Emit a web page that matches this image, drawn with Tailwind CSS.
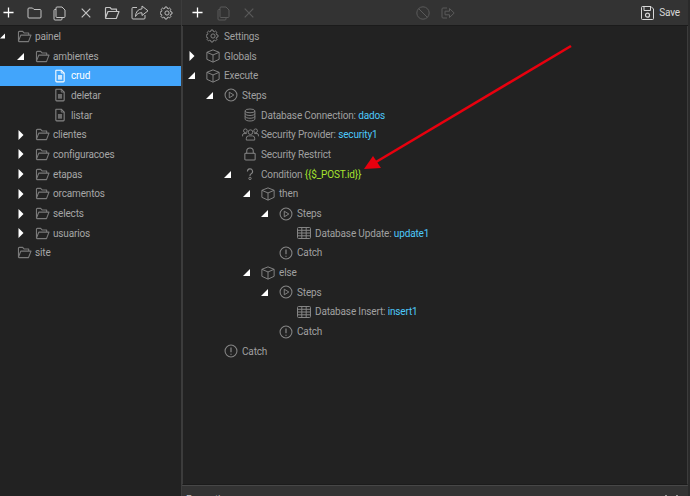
<!DOCTYPE html>
<html lang="en">
<head>
  <meta charset="UTF-8">
  <title>Server Action Editor</title>
  <script src="https://cdn.jsdelivr.net/npm/@tailwindcss/browser@4"></script>
</head>
<body class="bg-[#2a2a2a] overflow-hidden">
<svg class="hidden">
  <defs>
    <symbol id="open" viewBox="0 0 7 7"><path d="M7 0V7H0Z" fill="#fff"/></symbol>
    <symbol id="closed" viewBox="0 0 6 10"><path d="M0.5 0L5.5 5L0.5 10Z" fill="#fff"/></symbol>
    <symbol id="folder-open" viewBox="0 0 16 14"><path d="M1.5 11.5V2.5Q1.5 1.5 2.5 1.5H6L7.5 3.2H12.5V5.5M1.5 12L4 5.5H15L12.3 12.5H2Z" fill="none" stroke="currentColor" stroke-width="1.2" stroke-linejoin="round"/></symbol>
    <symbol id="file" viewBox="0 0 12 16"><path d="M1.5 1H7.5L11 4.5V14Q11 15 10 15H2Q1 15 1 14V1.5Z" fill="none" stroke="currentColor" stroke-width="1.3" stroke-linejoin="round"/><path d="M7.5 1V4.5H11" fill="none" stroke="currentColor"/><rect x="3.5" y="6.8" width="5" height="5.6" fill="currentColor" opacity=".75"/></symbol>
    <symbol id="cube" viewBox="0 0 16 16"><path d="M8 1L15 3.8V11.8L8 15L1 11.8V3.8ZM1 3.8L8 6.8L15 3.8M8 6.8V15" fill="none" stroke="currentColor" stroke-width="1.1" stroke-linejoin="round"/></symbol>
    <symbol id="gear" viewBox="0 0 24 24"><path d="M10 2h4l.6 2.9 1.9.8 2.5-1.6 2.9 2.9-1.6 2.5.8 1.9 2.9.6v4l-2.9.6-.8 1.9 1.6 2.5-2.9 2.9-2.5-1.6-1.9.8L14 26h-4" transform="scale(.857)" fill="none" stroke="currentColor" stroke-width="1.9" stroke-linejoin="round"/><path d="M10 2l-.6 2.9-1.9.8L5 4.1 2.1 7l1.6 2.5-.8 1.9L0 12v4l2.9.6.8 1.9L2.1 21 5 23.9l2.5-1.6 1.9.8L10 26" transform="scale(.857) translate(.1 0)" fill="none" stroke="currentColor" stroke-width="1.9" stroke-linejoin="round"/><circle cx="12" cy="12" r="3.6" fill="none" stroke="currentColor" stroke-width="1.6"/></symbol>
    <symbol id="play" viewBox="0 0 16 16"><circle cx="8" cy="8" r="6.8" fill="none" stroke="currentColor" stroke-width="1.2"/><path d="M6 4.8L11.2 8L6 11.2Z" fill="none" stroke="currentColor" stroke-width="1.1" stroke-linejoin="round"/></symbol>
    <symbol id="db" viewBox="0 0 14 16"><ellipse cx="7" cy="3.2" rx="5.7" ry="2.2" fill="none" stroke="currentColor" stroke-width="1.1"/><path d="M1.3 3.2V12.8C1.3 14 4 15 7 15S12.7 14 12.7 12.8V3.2M1.3 6.4C1.3 7.6 4 8.6 7 8.6S12.7 7.6 12.7 6.4M1.3 9.6C1.3 10.8 4 11.8 7 11.8S12.7 10.8 12.7 9.6" fill="none" stroke="currentColor" stroke-width="1.1"/></symbol>
    <symbol id="users" viewBox="0 0 18 14"><circle cx="9" cy="4.5" r="2.5" fill="none" stroke="currentColor"/><path d="M4.5 13V11Q4.5 8.5 7 8.5H11Q13.5 8.5 13.5 11V13Z" fill="none" stroke="currentColor"/><circle cx="3.5" cy="3" r="2" fill="none" stroke="currentColor"/><circle cx="14.5" cy="3" r="2" fill="none" stroke="currentColor"/><path d="M.5 9V7.5Q.5 6 2 6H5M17.5 9V7.5Q17.5 6 16 6H13" fill="none" stroke="currentColor"/></symbol>
    <symbol id="lock" viewBox="0 0 14 16"><rect x="1" y="7" width="12" height="8" rx="1" fill="none" stroke="currentColor" stroke-width="1.2"/><path d="M3.2 7V4.8A3.8 3.8 0 0 1 10.8 4.8V7" fill="none" stroke="currentColor" stroke-width="1.2"/></symbol>
    <symbol id="question" viewBox="0 0 10 16"><path d="M1.8 4.8A3.2 3.2 0 1 1 6.5 7.6Q5 8.4 5 10V10.5" fill="none" stroke="currentColor" stroke-width="1.4"/><circle cx="5" cy="13.5" r="1.5" fill="none" stroke="currentColor" stroke-width="1.2"/></symbol>
    <symbol id="table" viewBox="0 0 14 12"><rect x=".5" y=".5" width="13" height="11" rx="1" fill="none" stroke="currentColor"/><path d="M.5 3.3H13.5M.5 6H13.5M.5 8.8H13.5M4.8 .5V11.5M9.2 .5V11.5" fill="none" stroke="currentColor"/></symbol>
    <symbol id="alert" viewBox="0 0 16 16"><circle cx="8" cy="8" r="6.8" fill="none" stroke="currentColor" stroke-width="1.2"/><path d="M8 4V9.5M8 11V12.2" fill="none" stroke="currentColor" stroke-width="1.4"/></symbol>
    <symbol id="plus" viewBox="0 0 12 12"><path d="M6 .5V11.5M.5 6H11.5" fill="none" stroke="currentColor" stroke-width="1.4"/></symbol>
    <symbol id="folder" viewBox="0 0 15 12"><path d="M1 2Q1 1 2 1H5.5L7 2.5H13Q14 2.5 14 3.5V10Q14 11 13 11H2Q1 11 1 10Z" fill="none" stroke="currentColor" stroke-linejoin="round"/></symbol>
    <symbol id="copy" viewBox="0 0 13 15"><path d="M4 1H9L12 4V10.5Q12 11.5 11 11.5H4Q3 11.5 3 10.5V2Q3 1 4 1ZM3 3.5H2Q1 3.5 1 4.5V13Q1 14 2 14H8Q9 14 9 13V11.5" fill="none" stroke="currentColor" stroke-linejoin="round"/></symbol>
    <symbol id="x" viewBox="0 0 10 10"><path d="M.7 .7L9.3 9.3M9.3 .7L.7 9.3" fill="none" stroke="currentColor" stroke-width="1.2"/></symbol>
    <symbol id="share" viewBox="0 0 18 15"><path d="M14 10V13Q14 14 13 14H2Q1 14 1 13V3.5Q1 2.5 2 2.5H6" fill="none" stroke="currentColor"/><path d="M11 1L17 5.8L11 10.5V7.8Q6.5 7.5 4.5 11.5Q4.8 4.5 11 3.8Z" fill="none" stroke="currentColor" stroke-linejoin="round"/></symbol>
    <symbol id="ban" viewBox="0 0 14 14"><circle cx="7" cy="7" r="6.2" fill="none" stroke="currentColor"/><path d="M2.6 2.6L11.4 11.4" stroke="currentColor"/></symbol>
    <symbol id="export" viewBox="0 0 14 12"><path d="M6 1H2Q1 1 1 2V10Q1 11 2 11H6" fill="none" stroke="currentColor"/><path d="M4 4.2H8.5V1.5L13.2 6L8.5 10.5V7.8H4Z" fill="none" stroke="currentColor" stroke-linejoin="round"/></symbol>
    <symbol id="save" viewBox="0 0 13 14"><path d="M1.5 .5H10L12.5 3V12.5Q12.5 13.5 11.5 13.5H1.5Q.5 13.5 .5 12.5V1.5Q.5 .5 1.5 .5Z" fill="none" stroke="currentColor"/><path d="M3 .5V4.5H9.5V.5" fill="none" stroke="currentColor"/><circle cx="6.5" cy="9.2" r="2" fill="none" stroke="currentColor" stroke-width="1.2"/></symbol>
  </defs>
</svg>

<div class="relative flex w-[690px] h-[496px] overflow-hidden font-['Roboto',sans-serif] text-[10px] tracking-[-0.15px] text-[#a4a4a4]">
  <!-- file tree -->
  <aside class="w-[181px] flex flex-col bg-[#222] shrink-0">
    <div class="h-[26px] shrink-0 bg-[#333] border-b border-[#1b1b1b] relative text-[#c4c4c4]">
      <svg class="absolute left-[3px] top-[7px] w-[11px] h-[11px] text-white"><use href="#plus"/></svg>
      <svg class="absolute left-[27px] top-[7px] w-[15px] h-[12px]"><use href="#folder"/></svg>
      <svg class="absolute left-[53px] top-[6px] w-[13px] h-[15px]"><use href="#copy"/></svg>
      <svg class="absolute left-[81px] top-[8px] w-[10px] h-[10px]"><use href="#x"/></svg>
      <svg class="absolute left-[104px] top-[6px] w-[16px] h-[14px]"><use href="#folder-open"/></svg>
      <svg class="absolute left-[131px] top-[5px] w-[18px] h-[15px]"><use href="#share"/></svg>
      <svg class="absolute left-[160px] top-[6px] w-[14px] h-[14px]"><use href="#gear"/></svg>
    </div>
    <div class="flex flex-col text-[#a6a6a6] pt-[0.5px]">
      <div class="flex items-center h-[19.7px] -ml-[1px]"><span class="w-[18px] flex justify-start pl-[1px]"><svg class="w-[5px] h-[6px]"><use href="#open"/></svg></span><span class="w-[18px] text-[#7a7a7a]"><svg class="w-[15px] h-[13px]"><use href="#folder-open"/></svg></span>painel</div>
      <div class="flex items-center h-[19.7px] pl-[17px]"><span class="w-[18px]"><svg class="w-[7px] h-[7px]"><use href="#open"/></svg></span><span class="w-[18px] text-[#7a7a7a]"><svg class="w-[15px] h-[13px]"><use href="#folder-open"/></svg></span>ambientes</div>
      <div class="flex items-center h-[19.7px] pl-[35px] bg-[#42a5fb] text-white"><span class="w-[18px]"></span><span class="w-[18px] pl-[2px]"><svg class="w-[10px] h-[14px]"><use href="#file"/></svg></span>crud</div>
      <div class="flex items-center h-[19.7px] pl-[35px]"><span class="w-[18px]"></span><span class="w-[18px] pl-[2px] text-[#858585]"><svg class="w-[10px] h-[14px]"><use href="#file"/></svg></span>deletar</div>
      <div class="flex items-center h-[19.7px] pl-[35px]"><span class="w-[18px]"></span><span class="w-[18px] pl-[2px] text-[#858585]"><svg class="w-[10px] h-[14px]"><use href="#file"/></svg></span>listar</div>
      <div class="flex items-center h-[19.7px] pl-[17px]"><span class="w-[18px] pl-[1px]"><svg class="w-[6px] h-[10px]"><use href="#closed"/></svg></span><span class="w-[18px] text-[#7a7a7a]"><svg class="w-[15px] h-[13px]"><use href="#folder-open"/></svg></span>clientes</div>
      <div class="flex items-center h-[19.7px] pl-[17px]"><span class="w-[18px] pl-[1px]"><svg class="w-[6px] h-[10px]"><use href="#closed"/></svg></span><span class="w-[18px] text-[#7a7a7a]"><svg class="w-[15px] h-[13px]"><use href="#folder-open"/></svg></span>configuracoes</div>
      <div class="flex items-center h-[19.7px] pl-[17px]"><span class="w-[18px] pl-[1px]"><svg class="w-[6px] h-[10px]"><use href="#closed"/></svg></span><span class="w-[18px] text-[#7a7a7a]"><svg class="w-[15px] h-[13px]"><use href="#folder-open"/></svg></span>etapas</div>
      <div class="flex items-center h-[19.7px] pl-[17px]"><span class="w-[18px] pl-[1px]"><svg class="w-[6px] h-[10px]"><use href="#closed"/></svg></span><span class="w-[18px] text-[#7a7a7a]"><svg class="w-[15px] h-[13px]"><use href="#folder-open"/></svg></span>orcamentos</div>
      <div class="flex items-center h-[19.7px] pl-[17px]"><span class="w-[18px] pl-[1px]"><svg class="w-[6px] h-[10px]"><use href="#closed"/></svg></span><span class="w-[18px] text-[#7a7a7a]"><svg class="w-[15px] h-[13px]"><use href="#folder-open"/></svg></span>selects</div>
      <div class="flex items-center h-[19.7px] pl-[17px]"><span class="w-[18px] pl-[1px]"><svg class="w-[6px] h-[10px]"><use href="#closed"/></svg></span><span class="w-[18px] text-[#7a7a7a]"><svg class="w-[15px] h-[13px]"><use href="#folder-open"/></svg></span>usuarios</div>
      <div class="flex items-center h-[19.7px] -ml-[1px]"><span class="w-[18px]"></span><span class="w-[18px] text-[#7a7a7a]"><svg class="w-[15px] h-[13px]"><use href="#folder-open"/></svg></span>site</div>
    </div>
  </aside>

  <div class="w-[1px] bg-[#3c3c3c] shrink-0"></div>

  <!-- action editor -->
  <main class="flex-1 flex flex-col min-w-0 mr-[2px]">
    <div class="h-[26px] shrink-0 bg-[#333] border-b border-[#1b1b1b] relative text-[#5a5a5a]">
      <svg class="absolute left-[10px] top-[7px] w-[11px] h-[11px] text-white"><use href="#plus"/></svg>
      <svg class="absolute left-[35px] top-[6px] w-[13px] h-[15px]"><use href="#copy"/></svg>
      <svg class="absolute left-[62px] top-[8px] w-[10px] h-[10px]"><use href="#x"/></svg>
      <svg class="absolute left-[234px] top-[6px] w-[14px] h-[14px]"><use href="#ban"/></svg>
      <svg class="absolute left-[259px] top-[7px] w-[14px] h-[12px]"><use href="#export"/></svg>
      <div class="absolute right-[8px] top-0 h-[25px] flex items-center gap-[5px] text-[#d8d8d8]"><svg class="w-[13px] h-[14px]"><use href="#save"/></svg>Save</div>
    </div>
    <div class="flex-1 bg-[#222] border-x border-b border-x-[#3c3c3c] border-b-[#1b1b1b] flex flex-col text-[#a0a0a0] pt-[0.5px]">
      <div class="flex items-center h-[19.7px] pl-[5px]"><span class="w-[18px]"></span><span class="w-[18px] text-[#858585]"><svg class="w-[14px] h-[14px]"><use href="#gear"/></svg></span>Settings</div>
      <div class="flex items-center h-[19.7px] pl-[5px]"><span class="w-[18px] pl-[1px]"><svg class="w-[6px] h-[10px]"><use href="#closed"/></svg></span><span class="w-[18px] text-[#858585]"><svg class="w-[14px] h-[14px]"><use href="#cube"/></svg></span>Globals</div>
      <div class="flex items-center h-[19.7px] pl-[5px]"><span class="w-[18px]"><svg class="w-[7px] h-[7px]"><use href="#open"/></svg></span><span class="w-[18px] text-[#858585]"><svg class="w-[14px] h-[14px]"><use href="#cube"/></svg></span>Execute</div>
      <div class="flex items-center h-[19.7px] pl-[23px]"><span class="w-[18px]"><svg class="w-[7px] h-[7px]"><use href="#open"/></svg></span><span class="w-[18px] text-[#858585]"><svg class="w-[14px] h-[14px]"><use href="#play"/></svg></span>Steps</div>
      <div class="flex items-center h-[19.7px] pl-[41px]"><span class="w-[18px]"></span><span class="w-[19px] pl-[2px] text-[#858585]"><svg class="w-[12px] h-[14px]"><use href="#db"/></svg></span><span>Database Connection: <span class="text-[#4dc9fb]">dados</span></span></div>
      <div class="flex items-center h-[19.7px] pl-[41px]"><span class="w-[18px]"></span><span class="w-[19px] text-[#858585]"><svg class="w-[17px] h-[13px]"><use href="#users"/></svg></span><span>Security Provider: <span class="text-[#4dc9fb]">security1</span></span></div>
      <div class="flex items-center h-[19.7px] pl-[41px]"><span class="w-[18px]"></span><span class="w-[19px] pl-[2px] text-[#858585]"><svg class="w-[12px] h-[14px]"><use href="#lock"/></svg></span>Security Restrict</div>
      <div class="flex items-center h-[19.7px] pl-[41px]"><span class="w-[18px]"><svg class="w-[7px] h-[7px]"><use href="#open"/></svg></span><span class="w-[19px] pl-[4px] text-[#858585]"><svg class="w-[8px] h-[14px]"><use href="#question"/></svg></span><span>Condition <span class="text-[#a6e22e]">{{$_POST.id}}</span></span></div>
      <div class="flex items-center h-[19.7px] pl-[60px]"><span class="w-[18px]"><svg class="w-[7px] h-[7px]"><use href="#open"/></svg></span><span class="w-[18px] text-[#858585]"><svg class="w-[14px] h-[14px]"><use href="#cube"/></svg></span>then</div>
      <div class="flex items-center h-[19.7px] pl-[78px]"><span class="w-[18px]"><svg class="w-[7px] h-[7px]"><use href="#open"/></svg></span><span class="w-[18px] text-[#858585]"><svg class="w-[14px] h-[14px]"><use href="#play"/></svg></span>Steps</div>
      <div class="flex items-center h-[19.7px] pl-[96px]"><span class="w-[18px]"></span><span class="w-[18px] text-[#858585]"><svg class="w-[14px] h-[12px]"><use href="#table"/></svg></span><span>Database Update: <span class="text-[#4dc9fb]">update1</span></span></div>
      <div class="flex items-center h-[19.7px] pl-[78px]"><span class="w-[18px]"></span><span class="w-[18px] text-[#858585]"><svg class="w-[14px] h-[14px]"><use href="#alert"/></svg></span>Catch</div>
      <div class="flex items-center h-[19.7px] pl-[60px]"><span class="w-[18px]"><svg class="w-[7px] h-[7px]"><use href="#open"/></svg></span><span class="w-[18px] text-[#858585]"><svg class="w-[14px] h-[14px]"><use href="#cube"/></svg></span>else</div>
      <div class="flex items-center h-[19.7px] pl-[78px]"><span class="w-[18px]"><svg class="w-[7px] h-[7px]"><use href="#open"/></svg></span><span class="w-[18px] text-[#858585]"><svg class="w-[14px] h-[14px]"><use href="#play"/></svg></span>Steps</div>
      <div class="flex items-center h-[19.7px] pl-[96px]"><span class="w-[18px]"></span><span class="w-[18px] text-[#858585]"><svg class="w-[14px] h-[12px]"><use href="#table"/></svg></span><span>Database Insert: <span class="text-[#4dc9fb]">insert1</span></span></div>
      <div class="flex items-center h-[19.7px] pl-[78px]"><span class="w-[18px]"></span><span class="w-[18px] text-[#858585]"><svg class="w-[14px] h-[14px]"><use href="#alert"/></svg></span>Catch</div>
      <div class="flex items-center h-[19.7px] pl-[23px]"><span class="w-[18px]"></span><span class="w-[18px] text-[#858585]"><svg class="w-[14px] h-[14px]"><use href="#alert"/></svg></span>Catch</div>
    </div>
    <div class="h-[11px] shrink-0 bg-[#333] border-t border-[#474747] pl-[4px] pr-[10px] pt-[8px] leading-[12px] text-[#c4c4c4] flex justify-between">
      <span>Properties</span>
      <span class="flex gap-[9px] pt-[1px]"><span class="w-[2px] h-[4px] bg-[#999]"></span><span class="w-[2px] h-[4px] bg-[#999]"></span></span>
    </div>
  </main>

  <!-- red annotation arrow -->
  <svg class="absolute left-0 top-0 w-[690px] h-[496px] pointer-events-none" viewBox="0 0 690 496">
    <path d="M571 46L376 162" stroke="#e8000e" stroke-width="2.6" fill="none"/>
    <path d="M364 169L373 156L381 168Z" fill="#e8000e"/>
  </svg>
</div>
</body>
</html>
